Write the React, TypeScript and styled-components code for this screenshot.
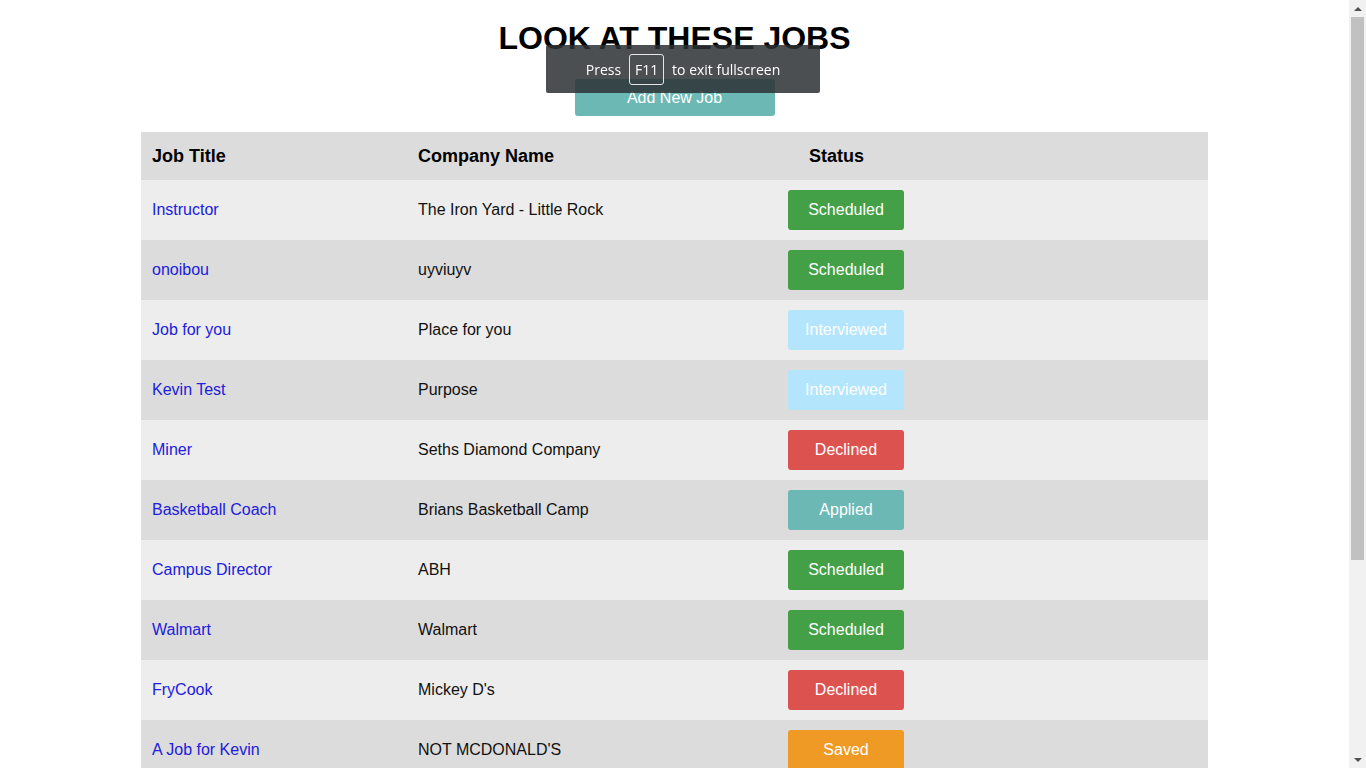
import styled, { createGlobalStyle } from 'styled-components';

const GlobalStyle = createGlobalStyle`
  html, body {
    margin: 0;
    padding: 0;
    overflow: hidden;
    background: #ffffff;
    font-family: 'Liberation Sans', Arial, sans-serif;
  }
`;

const Screen = styled.div`
  display: flex;
  height: 100vh;
  width: 100vw;
  overflow: hidden;
`;

const Page = styled.div`
  flex: 1;
  display: flex;
  flex-direction: column;
  align-items: center;
  padding-top: 20px;
  overflow: hidden;
  & > * {
    flex-shrink: 0;
  }
`;

const Title = styled.h1`
  margin: 0;
  font-size: 32px;
  font-weight: 700;
  color: #000;
  line-height: 37px;
`;

const AddButton = styled.button`
  margin-top: 22px;
  width: 200px;
  height: 37px;
  border: none;
  border-radius: 3px;
  background-color: #6cb8b4;
  color: #ffffff;
  font-family: 'Liberation Sans', Arial, sans-serif;
  font-size: 16px;
  cursor: pointer;
`;

const Table = styled.div`
  margin-top: 16px;
  width: 1067px;
  display: flex;
  flex-direction: column;
`;

const Row = styled.div<{ $head?: boolean; $odd?: boolean }>`
  display: grid;
  grid-template-columns: 266px 370px 1fr;
  align-items: center;
  flex-shrink: 0;
  height: ${(p) => (p.$head ? '48px' : '60px')};
  background-color: ${(p) => (p.$head || !p.$odd ? '#dcdcdc' : '#ededed')};
`;

const HeadCell = styled.div<{ $pad?: number }>`
  padding-left: ${(p) => p.$pad ?? 11}px;
  font-size: 18px;
  font-weight: 700;
  color: #000;
`;

const Cell = styled.div`
  padding-left: 11px;
  font-size: 16px;
  color: #111;
`;

const JobLink = styled.a`
  color: #2020dd;
  text-decoration: none;
  font-size: 16px;
`;

const statusColors: Record<string, string> = {
  Scheduled: '#43a047',
  Interviewed: '#b3e5fc',
  Declined: '#dc524f',
  Applied: '#6cb8b4',
  Saved: '#ef9a24',
};

const Badge = styled.button<{ $status: string }>`
  margin-left: 11px;
  width: 116px;
  height: 40px;
  border: none;
  border-radius: 3px;
  background-color: ${(p) => statusColors[p.$status]};
  color: #ffffff;
  font-family: 'Liberation Sans', Arial, sans-serif;
  font-size: 16px;
  cursor: pointer;
`;

const Scrollbar = styled.div`
  width: 17px;
  flex-shrink: 0;
  background-color: #f1f1f1;
  display: flex;
  flex-direction: column;
  align-items: center;
`;

const ScrollArrow = styled.div<{ $down?: boolean }>`
  height: 17px;
  width: 17px;
  display: flex;
  align-items: center;
  justify-content: center;
  &::after {
    content: '';
    width: 0;
    height: 0;
    border-left: 4px solid transparent;
    border-right: 4px solid transparent;
    ${(p) =>
      p.$down ? 'border-top: 4px solid #505050;' : 'border-bottom: 4px solid #505050;'}
  }
`;

const Thumb = styled.div`
  width: 13px;
  height: 543px;
  flex-shrink: 0;
  background-color: #c1c1c1;
`;

const Spacer = styled.div`
  flex: 1;
`;

const Toast = styled.div`
  position: fixed;
  top: 45px;
  left: 50%;
  transform: translateX(-50%);
  width: 274px;
  height: 48px;
  border-radius: 2px;
  background-color: rgba(45, 48, 52, 0.85);
  color: #ffffff;
  font-family: 'Open Sans', 'Noto Sans', sans-serif;
  font-size: 14px;
  font-weight: 500;
  display: flex;
  align-items: center;
  justify-content: center;
  gap: 8px;
`;

const Key = styled.span`
  display: inline-flex;
  align-items: center;
  justify-content: center;
  width: 33px;
  height: 29px;
  border: 1px solid #e6e6e6;
  border-radius: 3px;
`;

const jobs = [
  { title: 'Instructor', company: 'The Iron Yard - Little Rock', status: 'Scheduled' },
  { title: 'onoibou', company: 'uyviuyv', status: 'Scheduled' },
  { title: 'Job for you', company: 'Place for you', status: 'Interviewed' },
  { title: 'Kevin Test', company: 'Purpose', status: 'Interviewed' },
  { title: 'Miner', company: 'Seths Diamond Company', status: 'Declined' },
  { title: 'Basketball Coach', company: 'Brians Basketball Camp', status: 'Applied' },
  { title: 'Campus Director', company: 'ABH', status: 'Scheduled' },
  { title: 'Walmart', company: 'Walmart', status: 'Scheduled' },
  { title: 'FryCook', company: "Mickey D's", status: 'Declined' },
  { title: 'A Job for Kevin', company: "NOT MCDONALD'S", status: 'Saved' },
];

function App() {
  return (
    <Screen>
      <GlobalStyle />
      <Page>
        <Title>LOOK AT THESE JOBS</Title>
        <AddButton>Add New Job</AddButton>
        <Table>
          <Row $head>
            <HeadCell>Job Title</HeadCell>
            <HeadCell>Company Name</HeadCell>
            <HeadCell $pad={32}>Status</HeadCell>
          </Row>
          {jobs.map((job, i) => (
            <Row key={job.title} $odd={i % 2 === 0}>
              <Cell>
                <JobLink href="#">{job.title}</JobLink>
              </Cell>
              <Cell>{job.company}</Cell>
              <div>
                <Badge $status={job.status}>{job.status}</Badge>
              </div>
            </Row>
          ))}
        </Table>
      </Page>
      <Scrollbar>
        <ScrollArrow />
        <Thumb />
        <Spacer />
        <ScrollArrow $down />
      </Scrollbar>
      <Toast>
        <span>Press</span>
        <Key>F11</Key>
        <span>to exit fullscreen</span>
      </Toast>
    </Screen>
  );
}

export default App;
